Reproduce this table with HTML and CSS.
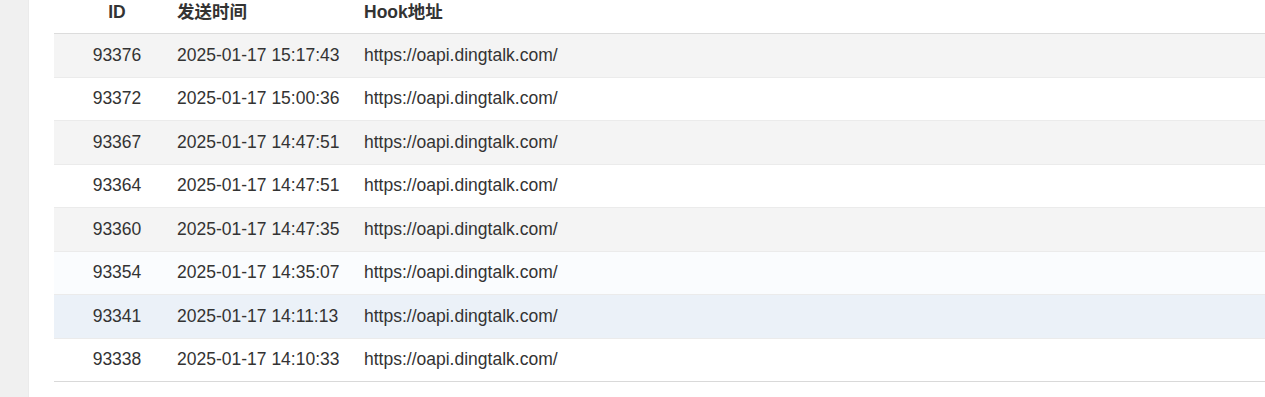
FILE: index.html
```html
<!DOCTYPE html>
<html lang="zh-CN">
<head>
<meta charset="utf-8">
<title>发送记录</title>
<link rel="stylesheet" href="styles.css">
</head>
<body>
<div class="layout">
  <aside class="side"></aside>
  <main class="main">
    <table class="log-table">
      <colgroup>
        <col class="c-id">
        <col class="c-time">
        <col class="c-hook">
      </colgroup>
      <thead>
        <tr>
          <th class="col-id">ID</th>
          <th>发送时间</th>
          <th>Hook地址</th>
        </tr>
      </thead>
      <tbody>
        <tr class="stripe"><td class="col-id">93376</td><td>2025-01-17 15:17:43</td><td>https://oapi.dingtalk.com/</td></tr>
        <tr><td class="col-id">93372</td><td>2025-01-17 15:00:36</td><td>https://oapi.dingtalk.com/</td></tr>
        <tr class="stripe"><td class="col-id">93367</td><td>2025-01-17 14:47:51</td><td>https://oapi.dingtalk.com/</td></tr>
        <tr><td class="col-id">93364</td><td>2025-01-17 14:47:51</td><td>https://oapi.dingtalk.com/</td></tr>
        <tr class="stripe"><td class="col-id">93360</td><td>2025-01-17 14:47:35</td><td>https://oapi.dingtalk.com/</td></tr>
        <tr class="fading"><td class="col-id">93354</td><td>2025-01-17 14:35:07</td><td>https://oapi.dingtalk.com/</td></tr>
        <tr class="hover"><td class="col-id">93341</td><td>2025-01-17 14:11:13</td><td>https://oapi.dingtalk.com/</td></tr>
        <tr><td class="col-id">93338</td><td>2025-01-17 14:10:33</td><td>https://oapi.dingtalk.com/</td></tr>
      </tbody>
    </table>
  </main>
</div>
</body>
</html>
```
FILE: styles.css
```css
html, body {
  margin: 0;
  padding: 0;
  background: #ffffff;
}

body {
  font-family: "Liberation Sans", Arial, "Noto Sans CJK SC", sans-serif;
  font-size: 17.5px;
  color: #333;
  overflow: hidden;
}

.layout {
  display: flex;
  height: 397px;
}

.side {
  width: 28px;
  flex: none;
  background: #f0f0f0;
  border-right: 1px solid #ebebeb;
}

.main {
  flex: 1;
  padding-left: 25px;
  background: #fff;
}

.log-table {
  width: 100%;
  border-collapse: separate;
  border-spacing: 0;
  table-layout: fixed;
}

.c-id { width: 111px; }
.c-time { width: 187px; }

.log-table th {
  height: 34px;
  box-sizing: border-box;
  padding: 2px 12px 0;
  line-height: 21px;
  vertical-align: top;
  text-align: left;
  font-weight: bold;
  color: #333;
  border-bottom: 1px solid #dcdcdc;
  white-space: nowrap;
}

.log-table td {
  height: 43.5px;
  box-sizing: border-box;
  padding: 0 12px;
  line-height: 21px;
  vertical-align: middle;
  border-bottom: 1px solid #ebebeb;
  white-space: nowrap;
}

.log-table .col-id {
  text-align: center;
  padding-left: 27px;
  padding-right: 12px;
}

.log-table tbody tr:last-child td {
  border-bottom-color: #d9d9d9;
}

.stripe td { background: #f4f4f4; }
.fading td { background: #fafcfe; }
.hover td { background: #ebf1f8; }
```
